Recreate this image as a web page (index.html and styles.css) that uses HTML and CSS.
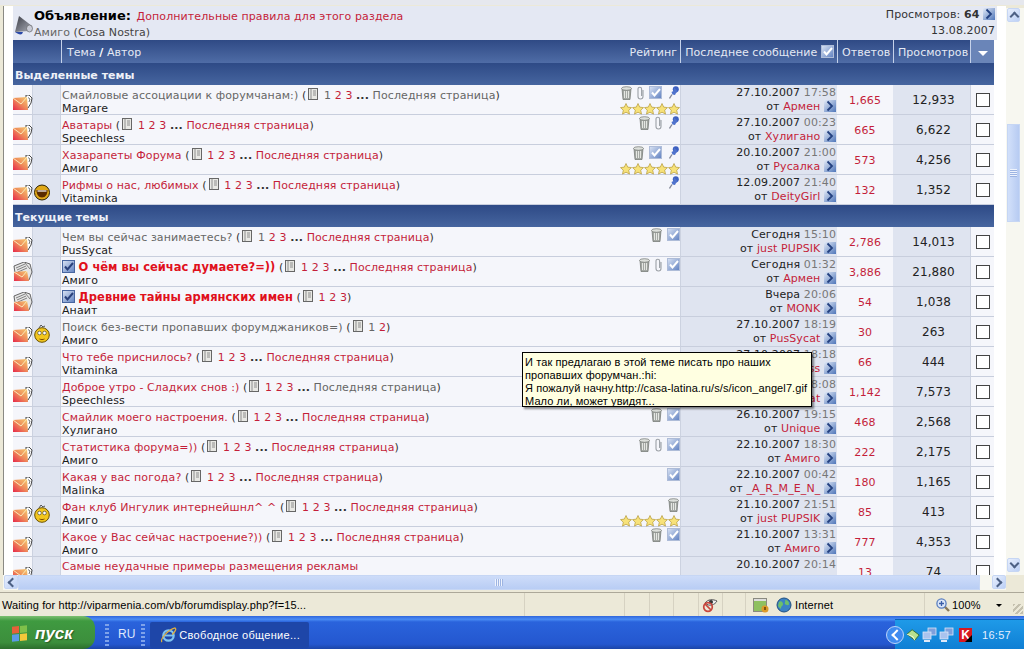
FILE: index.html
```html
<!DOCTYPE html>
<html lang="ru">
<head>
    <meta charset="UTF-8">
    <title>Свободное общение</title>
    <link rel="stylesheet" href="styles.css">
</head>
<body>
    <svg class="defs" width="0" height="0">
        <defs>
            <linearGradient id="envGrad" x1="1" y1="0" x2="0" y2="1"><stop offset="0" stop-color="#f5cf72"/><stop offset=".5" stop-color="#ef8a5a"/><stop offset="1" stop-color="#e6284a"/></linearGradient>
            <linearGradient id="goGrad" x1="0" y1="0" x2="1" y2="1"><stop offset="0" stop-color="#e4ebf7"/><stop offset="1" stop-color="#4f76ba"/></linearGradient>
            <linearGradient id="boxGrad" x1="0" y1="0" x2="1" y2="1"><stop offset="0" stop-color="#dbe4f4"/><stop offset="1" stop-color="#5f80c0"/></linearGradient>
            <linearGradient id="hornGrad" x1="0" y1="0" x2="1" y2="1"><stop offset="0" stop-color="#3c3e46"/><stop offset="1" stop-color="#a9adb8"/></linearGradient>
            <symbol id="env" viewBox="0 0 20 15">
                <path d="M13 0h3l3 3-1 5-3 5h-2z" fill="#fff" stroke="#333" stroke-width=".9"/>
                <path d="M15 2.500l2 1.500-1 3" fill="none" stroke="#555" stroke-width=".8"/>
                <path d="M0 3l14-1 1 13H0z" fill="url(#envGrad)"/>
                <path d="M0 3l8 6 6-7" fill="none" stroke="#fbe9b8" stroke-width="1"/>
            </symbol>
            <symbol id="envhot" viewBox="0 0 20 20">
                <path d="M1 4l10-4 6 2 2 8-3 8H3z" fill="#e6e6e6" stroke="#444" stroke-width=".8"/>
                <path d="M3 6l9-4M4 8l9-4M5 10l9-4M12 1l5 6" stroke="#555" stroke-width=".7" fill="none"/>
                <path d="M1 10l13-1 2 10H1z" fill="url(#envGrad)"/>
                <path d="M1 10l8 5 5-6" fill="none" stroke="#fbe9b8" stroke-width="1"/>
            </symbol>
            <symbol id="trash" viewBox="0 0 11 14">
                <path d="M1 2.500h9l-1 11H2z" fill="#a4a8a4" stroke="#6f736f" stroke-width=".7"/>
                <ellipse cx="5.500" cy="2.500" rx="5" ry="1.800" fill="#dde0dc" stroke="#6f736f" stroke-width=".7"/>
                <path d="M3.500 5v7M5.500 5v7M7.500 5v7" stroke="#eceeea" stroke-width=".9"/>
            </symbol>
            <symbol id="clip" viewBox="0 0 7 14">
                <path d="M6 4v6.500a2.500 2.500 0 0 1-5 0V3a1.800 1.800 0 0 1 3.600 0V10" fill="none" stroke="#9ba0a6" stroke-width="1.100"/>
            </symbol>
            <symbol id="check" viewBox="0 0 13 13">
                <rect x=".5" y=".5" width="12" height="12" fill="url(#boxGrad)" stroke="#aebcd8"/>
                <path d="M3 6.500l2.500 3L11 3" fill="none" stroke="#fff" stroke-width="2"/>
            </symbol>
            <symbol id="checkb" viewBox="0 0 13 13">
                <rect x=".5" y=".5" width="12" height="12" fill="url(#boxGrad)" stroke="#47659f"/>
                <path d="M3 6.500l2.500 3L11 3" fill="none" stroke="#29407a" stroke-width="2"/>
            </symbol>
            <symbol id="pin" viewBox="0 0 10 13">
                <circle cx="6.800" cy="3.200" r="3" fill="#3c5fc0"/>
                <path d="M5 1.500l4 4-2 1.500-1 2-2.500-.5-1-2.500 2-1z" fill="#4f72cc"/>
                <path d="M3 8.500L.5 12.500" stroke="#7f8494" stroke-width="1.300"/>
            </symbol>
            <symbol id="star" viewBox="0 0 12 12">
                <path d="M6 .5l1.700 3.600 3.800.5-2.800 2.600.8 3.900L6 9.200l-3.500 1.900.8-3.900L.5 4.600l3.800-.5z" fill="#f7e27a" stroke="#b59a3a" stroke-width=".7"/>
            </symbol>
            <symbol id="go" viewBox="0 0 12 12">
                <rect width="12" height="12" fill="url(#goGrad)"/>
                <path d="M3.500 1.500L8 6l-4.500 4.500" fill="none" stroke="#23407f" stroke-width="1.800"/>
            </symbol>
            <symbol id="doc" viewBox="0 0 12 12">
                <rect x="1.500" y=".5" width="9" height="11" fill="#e8e8e4" stroke="#666"/>
                <path d="M4 .5v11M6 3h3M6 5h3M6 7h3" stroke="#777" stroke-width=".8"/>
            </symbol>
            <symbol id="smile" viewBox="0 0 16 20">
                <circle cx="8" cy="12" r="7.300" fill="#f2c61e" stroke="#6b5200"/>
                <circle cx="5.500" cy="10" r="1.800" fill="#fff" stroke="#333" stroke-width=".6"/>
                <circle cx="10.500" cy="10" r="1.800" fill="#fff" stroke="#333" stroke-width=".6"/>
                <path d="M5.500 16c1.700.8 3.300.8 5 0" fill="none" stroke="#7a4a00"/>
                <path d="M5 5l2-3 2 2 2-1" fill="none" stroke="#555"/>
            </symbol>
            <symbol id="laugh" viewBox="0 0 16 18">
                <circle cx="8" cy="9.500" r="7.500" fill="#e0a818" stroke="#2e2100"/>
                <path d="M2.500 7h11c.2 4-2 7.500-5.500 7.500S2.300 11 2.500 7z" fill="#5b2c00"/>
                <path d="M3.500 8h9" stroke="#fff" stroke-width="1.200"/>
            </symbol>
            <symbol id="horn" viewBox="0 0 19 20">
                <path d="M5 1l13 10-3 5-14 1z" fill="url(#hornGrad)"/>
                <path d="M1 17c3 2 5 3 7 2l1-2z" fill="#2a49a8"/>
                <ellipse cx="15.500" cy="13.500" rx="3" ry="3.500" fill="#c9ccd6" stroke="#555" stroke-width=".6"/>
            </symbol>
            <symbol id="ieglobe" viewBox="0 0 16 16">
                <circle cx="8" cy="8" r="7" fill="#3b81c4" stroke="#1f4f80"/>
                <path d="M3 5c2-2 4 0 4 2s-2 2-2 4-2-1-3-2M9 3c3 0 4 2 4 4s-3 1-4 0 1-2 0-4z" fill="#6ec06a"/>
            </symbol>
            <symbol id="ielogo" viewBox="0 0 18 18">
                <circle cx="9" cy="9" r="5.500" fill="none" stroke="#7fc4f2" stroke-width="2.400"/>
                <path d="M4 9h10" stroke="#7fc4f2" stroke-width="2"/>
                <path d="M2 16C0 13 8 3 16 1c2 1-1 5-3 7" fill="none" stroke="#e0b040" stroke-width="1.300"/>
            </symbol>
            <symbol id="eye" viewBox="0 0 16 16">
                <path d="M3 6c3-4 8-4 12-2-2 4-8 6-12 2z" fill="#eee" stroke="#555"/>
                <circle cx="9" cy="5" r="2" fill="#333"/>
                <circle cx="6" cy="10" r="4.300" fill="none" stroke="#c8453c" stroke-width="1.700"/>
                <path d="M3 7l6 6" stroke="#c8453c" stroke-width="1.700"/>
            </symbol>
            <symbol id="lock" viewBox="0 0 16 16">
                <rect x=".5" y="1.500" width="13" height="13" fill="#8fc060" stroke="#8a8a80"/>
                <path d="M1 2h12v2H1z" fill="#ddd"/>
                <circle cx="12" cy="12" r="3.500" fill="#dc9a2a"/>
                <path d="M12 10v3" stroke="#5a3a00" stroke-width="1.400"/>
            </symbol>
            <symbol id="lens" viewBox="0 0 14 14">
                <path d="M8 8l5 5" stroke="#8a7a5a" stroke-width="2.400"/>
                <circle cx="5.500" cy="5.500" r="4.600" fill="#dbe6f8" stroke="#5a7fc0" stroke-width="1.300"/>
                <path d="M3 5.500h5M5.500 3v5" stroke="#3b5fa8" stroke-width="1.300"/>
            </symbol>
            <symbol id="net" viewBox="0 0 15 15">
                <rect x="6" y="1" width="8" height="7" fill="#7ea0dc" stroke="#dbe6f8" stroke-width=".8"/>
                <rect x="1" y="5" width="8" height="7" fill="#a9c3ee" stroke="#dbe6f8" stroke-width=".8"/>
                <path d="M2 14h6" stroke="#dfe8f8" stroke-width="2"/>
            </symbol>
            <symbol id="trayenv" viewBox="0 0 16 14">
                <path d="M1 6l6-5 8 6-5 6z" fill="#b7e08e" stroke="#2f6b2f"/>
                <path d="M1 6l7 3 2 4" fill="none" stroke="#f4f8e6"/>
            </symbol>
        </defs>
    </svg>

    <div class="browser">
        <div class="viewport">
            <div class="page">
                <div class="announce">
                    <svg class="horn"><use href="#horn"/></svg>
                    <div class="announce-text">
                        <div><b class="announce-label">Объявление:</b> <a>Дополнительные правила для этого раздела</a></div>
                        <div class="announce-by"><span class="muted">Амиго</span> (Cosa Nostra)</div>
                    </div>
                    <div class="announce-meta">
                        <div>Просмотров: <b>64</b> <svg class="go"><use href="#go"/></svg></div>
                        <div>13.08.2007</div>
                    </div>
                </div>

                <table class="topics">
                    <colgroup>
                        <col class="c-icon"><col class="c-smile"><col class="c-title"><col class="c-last"><col class="c-replies"><col class="c-views"><col class="c-box">
                    </colgroup>
                    <thead>
                        <tr class="thead">
                            <th colspan="2"></th>
                            <th><div class="th-title"><span>Тема <b>/</b> Автор</span><span>Рейтинг</span></div></th>
                            <th class="num">Последнее сообщение <svg class="check"><use href="#check"/></svg></th>
                            <th class="num">Ответов</th>
                            <th class="num">Просмотров</th>
                            <th class="sortcell"><span class="tri"></span></th>
                        </tr>
                    </thead>
                    <tbody>
                        <tr class="section"><td colspan="7">Выделенные темы</td></tr>

                        <tr>
                            <td class="alt1"><svg class="env"><use href="#env"/></svg></td><td class="alt2"></td>
                            <td class="title">
                                <div class="title-icons stacked">
                                    <div><svg class="i-trash"><use href="#trash"/></svg><svg class="i-clip"><use href="#clip"/></svg><svg class="i-check"><use href="#check"/></svg><svg class="i-pin"><use href="#pin"/></svg></div>
                                    <div class="stars"><svg><use href="#star"/></svg><svg><use href="#star"/></svg><svg><use href="#star"/></svg><svg><use href="#star"/></svg><svg><use href="#star"/></svg></div>
                                </div>
                                <div class="line"><a class="seen">Смайловые ассоциации к форумчанам:)</a> (<svg class="doc"><use href="#doc"/></svg> <span class="seen">1</span> <a>2</a> <a>3</a> <b>...</b> <span class="seen">Последняя страница</span>)</div>
                                <div class="line author">Margare</div>
                            </td>
                            <td class="last"><div class="line">27.10.2007 <span class="time">17:58</span></div><div class="line">от <a>Армен</a> <svg class="go"><use href="#go"/></svg></div></td>
                            <td class="replies"><a>1,665</a></td><td class="views">12,933</td><td class="box"><span class="cb"></span></td>
                        </tr>
                        <tr>
                            <td class="alt1"><svg class="env"><use href="#env"/></svg></td><td class="alt2"></td>
                            <td class="title">
                                <div class="title-icons stacked">
                                    <div><svg class="i-trash"><use href="#trash"/></svg><svg class="i-clip"><use href="#clip"/></svg><svg class="i-pin"><use href="#pin"/></svg></div>
                                </div>
                                <div class="line"><a>Аватары</a> (<svg class="doc"><use href="#doc"/></svg> <a>1</a> <a>2</a> <a>3</a> <b>...</b> <a>Последняя страница</a>)</div>
                                <div class="line author">Speechless</div>
                            </td>
                            <td class="last"><div class="line">27.10.2007 <span class="time">00:23</span></div><div class="line">от <a>Хулигано</a> <svg class="go"><use href="#go"/></svg></div></td>
                            <td class="replies"><a>665</a></td><td class="views">6,622</td><td class="box"><span class="cb"></span></td>
                        </tr>
                        <tr>
                            <td class="alt1"><svg class="env"><use href="#env"/></svg></td><td class="alt2"></td>
                            <td class="title">
                                <div class="title-icons stacked">
                                    <div><svg class="i-trash"><use href="#trash"/></svg><svg class="i-check"><use href="#check"/></svg><svg class="i-pin"><use href="#pin"/></svg></div>
                                    <div class="stars"><svg><use href="#star"/></svg><svg><use href="#star"/></svg><svg><use href="#star"/></svg><svg><use href="#star"/></svg><svg><use href="#star"/></svg></div>
                                </div>
                                <div class="line"><a>Хазарапеты Форума</a> (<svg class="doc"><use href="#doc"/></svg> <a>1</a> <a>2</a> <a>3</a> <b>...</b> <a>Последняя страница</a>)</div>
                                <div class="line author">Амиго</div>
                            </td>
                            <td class="last"><div class="line">20.10.2007 <span class="time">21:00</span></div><div class="line">от <a>Русалка</a> <svg class="go"><use href="#go"/></svg></div></td>
                            <td class="replies"><a>573</a></td><td class="views">4,256</td><td class="box"><span class="cb"></span></td>
                        </tr>
                        <tr>
                            <td class="alt1"><svg class="env"><use href="#env"/></svg></td><td class="alt2"><svg class="smiley laughing"><use href="#laugh"/></svg></td>
                            <td class="title">
                                <div class="title-icons stacked"><div><svg class="i-pin"><use href="#pin"/></svg></div></div>
                                <div class="line"><a>Рифмы о нас, любимых</a> (<svg class="doc"><use href="#doc"/></svg> <a>1</a> <a>2</a> <a>3</a> <b>...</b> <a>Последняя страница</a>)</div>
                                <div class="line author">Vitaminka</div>
                            </td>
                            <td class="last"><div class="line">12.09.2007 <span class="time">21:40</span></div><div class="line">от <a>DeityGirl</a> <svg class="go"><use href="#go"/></svg></div></td>
                            <td class="replies"><a>132</a></td><td class="views">1,352</td><td class="box"><span class="cb"></span></td>
                        </tr>

                        <tr class="section"><td colspan="7">Текущие темы</td></tr>

                        <tr>
                            <td class="alt1"><svg class="env"><use href="#env"/></svg></td><td class="alt2"></td>
                            <td class="title">
                                <div class="title-icons"><svg class="i-trash"><use href="#trash"/></svg><svg class="i-check"><use href="#check"/></svg></div>
                                <div class="line"><a class="seen">Чем вы сейчас занимаетесь?</a> (<svg class="doc"><use href="#doc"/></svg> <span class="seen">1</span> <a>2</a> <a>3</a> <b>...</b> <a>Последняя страница</a>)</div>
                                <div class="line author">PusSycat</div>
                            </td>
                            <td class="last"><div class="line">Сегодня <span class="time">15:10</span></div><div class="line">от <a>just PUPSIK</a> <svg class="go"><use href="#go"/></svg></div></td>
                            <td class="replies"><a>2,786</a></td><td class="views">14,013</td><td class="box"><span class="cb"></span></td>
                        </tr>
                        <tr>
                            <td class="alt1"><svg class="env hot"><use href="#envhot"/></svg></td><td class="alt2"></td>
                            <td class="title">
                                <div class="title-icons"><svg class="i-trash"><use href="#trash"/></svg><svg class="i-clip"><use href="#clip"/></svg><svg class="i-check"><use href="#check"/></svg></div>
                                <div class="line"><svg class="title-check"><use href="#checkb"/></svg> <a class="strong">О чём вы сейчас думаете?=))</a> (<svg class="doc"><use href="#doc"/></svg> <a>1</a> <a>2</a> <a>3</a> <b>...</b> <a>Последняя страница</a>)</div>
                                <div class="line author">Амиго</div>
                            </td>
                            <td class="last"><div class="line">Сегодня <span class="time">01:32</span></div><div class="line">от <a>Армен</a> <svg class="go"><use href="#go"/></svg></div></td>
                            <td class="replies"><a>3,886</a></td><td class="views">21,880</td><td class="box"><span class="cb"></span></td>
                        </tr>
                        <tr>
                            <td class="alt1"><svg class="env hot"><use href="#envhot"/></svg></td><td class="alt2"></td>
                            <td class="title">
                                <div class="line"><svg class="title-check"><use href="#checkb"/></svg> <a class="strong">Древние тайны армянских имен</a> (<svg class="doc"><use href="#doc"/></svg> <a>1</a> <a>2</a> <a>3</a>)</div>
                                <div class="line author">Анаит</div>
                            </td>
                            <td class="last"><div class="line">Вчера <span class="time">20:06</span></div><div class="line">от <a>MONK</a> <svg class="go"><use href="#go"/></svg></div></td>
                            <td class="replies"><a>54</a></td><td class="views">1,038</td><td class="box"><span class="cb"></span></td>
                        </tr>
                        <tr>
                            <td class="alt1"><svg class="env"><use href="#env"/></svg></td><td class="alt2"><svg class="smiley"><use href="#smile"/></svg></td>
                            <td class="title">
                                <div class="line"><a class="seen">Поиск без-вести пропавших форумджаников=)</a> (<svg class="doc"><use href="#doc"/></svg> <span class="seen">1</span> <a>2</a>)</div>
                                <div class="line author">Амиго</div>
                            </td>
                            <td class="last"><div class="line">27.10.2007 <span class="time">18:19</span></div><div class="line">от <a>PusSycat</a> <svg class="go"><use href="#go"/></svg></div></td>
                            <td class="replies"><a>30</a></td><td class="views">263</td><td class="box"><span class="cb"></span></td>
                        </tr>
                        <tr>
                            <td class="alt1"><svg class="env"><use href="#env"/></svg></td><td class="alt2"></td>
                            <td class="title">
                                <div class="line"><a>Что тебе приснилось?</a> (<svg class="doc"><use href="#doc"/></svg> <a>1</a> <a>2</a> <a>3</a> <b>...</b> <a>Последняя страница</a>)</div>
                                <div class="line author">Vitaminka</div>
                            </td>
                            <td class="last"><div class="line">27.10.2007 <span class="time">18:18</span></div><div class="line">от <a>Miss</a> <svg class="go"><use href="#go"/></svg></div></td>
                            <td class="replies"><a>66</a></td><td class="views">444</td><td class="box"><span class="cb"></span></td>
                        </tr>
                        <tr>
                            <td class="alt1"><svg class="env"><use href="#env"/></svg></td><td class="alt2"></td>
                            <td class="title">
                                <div class="line"><a>Доброе утро - Сладких снов :)</a> (<svg class="doc"><use href="#doc"/></svg> <a>1</a> <a>2</a> <a>3</a> <b>...</b> <span class="seen">Последняя страница</span>)</div>
                                <div class="line author">Speechless</div>
                            </td>
                            <td class="last"><div class="line">27.10.2007 <span class="time">18:08</span></div><div class="line">от <a>Pussycat</a> <svg class="go"><use href="#go"/></svg></div></td>
                            <td class="replies"><a>1,142</a></td><td class="views">7,573</td><td class="box"><span class="cb"></span></td>
                        </tr>
                        <tr>
                            <td class="alt1"><svg class="env"><use href="#env"/></svg></td><td class="alt2"></td>
                            <td class="title">
                                <div class="title-icons"><svg class="i-trash"><use href="#trash"/></svg><svg class="i-check"><use href="#check"/></svg></div>
                                <div class="line"><a>Смайлик моего настроения.</a> (<svg class="doc"><use href="#doc"/></svg> <a>1</a> <a>2</a> <a>3</a> <b>...</b> <a>Последняя страница</a>)</div>
                                <div class="line author">Хулигано</div>
                            </td>
                            <td class="last"><div class="line">26.10.2007 <span class="time">19:15</span></div><div class="line">от <a>Unique</a> <svg class="go"><use href="#go"/></svg></div></td>
                            <td class="replies"><a>468</a></td><td class="views">2,568</td><td class="box"><span class="cb"></span></td>
                        </tr>
                        <tr>
                            <td class="alt1"><svg class="env"><use href="#env"/></svg></td><td class="alt2"></td>
                            <td class="title">
                                <div class="title-icons"><svg class="i-trash"><use href="#trash"/></svg><svg class="i-clip"><use href="#clip"/></svg><svg class="i-check"><use href="#check"/></svg></div>
                                <div class="line"><a>Статистика форума=))</a> (<svg class="doc"><use href="#doc"/></svg> <a>1</a> <a>2</a> <a>3</a> <b>...</b> <a>Последняя страница</a>)</div>
                                <div class="line author">Амиго</div>
                            </td>
                            <td class="last"><div class="line">22.10.2007 <span class="time">18:30</span></div><div class="line">от <a>Амиго</a> <svg class="go"><use href="#go"/></svg></div></td>
                            <td class="replies"><a>222</a></td><td class="views">2,175</td><td class="box"><span class="cb"></span></td>
                        </tr>
                        <tr>
                            <td class="alt1"><svg class="env"><use href="#env"/></svg></td><td class="alt2"></td>
                            <td class="title">
                                <div class="title-icons"><svg class="i-check"><use href="#check"/></svg></div>
                                <div class="line"><a>Какая у вас погода?</a> (<svg class="doc"><use href="#doc"/></svg> <a>1</a> <a>2</a> <a>3</a> <b>...</b> <a>Последняя страница</a>)</div>
                                <div class="line author">Malinka</div>
                            </td>
                            <td class="last"><div class="line">22.10.2007 <span class="time">00:42</span></div><div class="line">от <a>_A_R_M_E_N_</a> <svg class="go"><use href="#go"/></svg></div></td>
                            <td class="replies"><a>180</a></td><td class="views">1,165</td><td class="box"><span class="cb"></span></td>
                        </tr>
                        <tr>
                            <td class="alt1"><svg class="env"><use href="#env"/></svg></td><td class="alt2"><svg class="smiley"><use href="#smile"/></svg></td>
                            <td class="title">
                                <div class="title-icons stacked">
                                    <div><svg class="i-trash"><use href="#trash"/></svg></div>
                                    <div class="stars"><svg><use href="#star"/></svg><svg><use href="#star"/></svg><svg><use href="#star"/></svg><svg><use href="#star"/></svg><svg><use href="#star"/></svg></div>
                                </div>
                                <div class="line"><a>Фан клуб Ингулик интернейшнл^ ^</a> (<svg class="doc"><use href="#doc"/></svg> <a>1</a> <a>2</a> <a>3</a> <b>...</b> <a>Последняя страница</a>)</div>
                                <div class="line author">Амиго</div>
                            </td>
                            <td class="last"><div class="line">21.10.2007 <span class="time">21:51</span></div><div class="line">от <a>just PUPSIK</a> <svg class="go"><use href="#go"/></svg></div></td>
                            <td class="replies"><a>85</a></td><td class="views">413</td><td class="box"><span class="cb"></span></td>
                        </tr>
                        <tr>
                            <td class="alt1"><svg class="env"><use href="#env"/></svg></td><td class="alt2"></td>
                            <td class="title">
                                <div class="title-icons"><svg class="i-trash"><use href="#trash"/></svg><svg class="i-check"><use href="#check"/></svg></div>
                                <div class="line"><a>Какое у Вас сейчас настроение?))</a> (<svg class="doc"><use href="#doc"/></svg> <a>1</a> <a>2</a> <a>3</a> <b>...</b> <a>Последняя страница</a>)</div>
                                <div class="line author">Амиго</div>
                            </td>
                            <td class="last"><div class="line">21.10.2007 <span class="time">13:31</span></div><div class="line">от <a>Амиго</a> <svg class="go"><use href="#go"/></svg></div></td>
                            <td class="replies"><a>777</a></td><td class="views">4,353</td><td class="box"><span class="cb"></span></td>
                        </tr>
                        <tr>
                            <td class="alt1"><svg class="env"><use href="#env"/></svg></td><td class="alt2"></td>
                            <td class="title">
                                <div class="line"><a>Самые неудачные примеры размещения рекламы</a></div>
                            </td>
                            <td class="last"><div class="line">20.10.2007 <span class="time">20:14</span></div></td>
                            <td class="replies"><a>13</a></td><td class="views">74</td><td class="box"><span class="cb"></span></td>
                        </tr>
                    </tbody>
                </table>

                <div class="tooltip">
                    И так предлагаю в этой теме писать про наших<br>
                    пропавших форумчан.:hi:<br>
                    Я пожалуй начну.http://casa-latina.ru/s/s/icon_angel7.gif<br>
                    Мало ли, может увидят...
                </div>
            </div>
            <div class="vscroll">
                <div class="sb-btn up"></div>
                <div class="sb-track"><div class="sb-thumb"></div></div>
                <div class="sb-btn down"></div>
            </div>
        </div>
        <div class="hscroll">
            <div class="sb-btn left"></div>
            <div class="hs-track"><div class="hs-thumb"></div></div>
            <div class="sb-btn right"></div>
        </div>
    </div>

    <div class="statusbar">
        <div class="status-text">Waiting for http://viparmenia.com/vb/forumdisplay.php?f=15...</div>
        <div class="status-pane w1"></div>
        <div class="status-pane w2"></div>
        <div class="status-pane w2"></div>
        <div class="status-pane w2"></div>
        <div class="status-pane w2 privacy"><svg class="st-icon"><use href="#eye"/></svg></div>
        <div class="status-pane w3"></div>
        <div class="status-pane zone"><svg class="st-icon"><use href="#lock"/></svg><svg class="st-icon"><use href="#ieglobe"/></svg>Internet</div>
        <div class="status-pane zoom"><svg class="lens"><use href="#lens"/></svg>100%<span class="zoom-tri"></span><span class="resize"></span></div>
    </div>

    <div class="taskbar">
        <div class="start"><span class="flag"><i></i><i></i><i></i><i></i></span>пуск</div>
        <div class="grip"></div>
        <div class="lang">RU</div>
        <div class="grip"></div>
        <div class="task"><svg class="ie"><use href="#ielogo"/></svg>Свободное общение...</div>
        <div class="tray">
            <span class="tray-toggle"></span>
            <svg class="tray-env"><use href="#trayenv"/></svg>
            <svg class="tray-net"><use href="#net"/></svg>
            <svg class="tray-net"><use href="#net"/></svg>
            <span class="tray-k">K</span>
            <span class="clock">16:57</span>
        </div>
    </div>
</body>
</html>
```

FILE: styles.css
```css
* {
    box-sizing: border-box;
}

html, body {
    margin: 0;
    height: 649px;
    overflow: hidden;
}

body {
    display: flex;
    flex-direction: column;
    font-family: "DejaVu Sans", Verdana, sans-serif;
    font-size: 11px;
    letter-spacing: .1px;
    color: #000;
    background: #fff;
}

.defs {
    position: absolute;
}

a {
    color: #c41e3a;
}

/* browser frame */
.browser {
    height: 592px;
    flex: none;
    display: flex;
    flex-direction: column;
    padding: 1px 0 2px 3px;
    border-top: 5px solid;
    border-image: linear-gradient(#e6e8ee 60%, #85878c 60%) 5;
    background: #ece9d8;
}

.viewport {
    flex: 1;
    display: flex;
    min-height: 0;
    border-left: 1px solid #8a8a84;
}

.page {
    position: relative;
    width: 1002px;
    flex: none;
    padding: 0 9px;
    overflow: hidden;
    background: #fff;
}

/* announcement */
.announce {
    display: flex;
    height: 34px;
    background: #e4e8f3;
    padding-right: 2px;
}

.horn {
    width: 19px;
    height: 20px;
    margin: 9px 1px 0 1px;
    flex: none;
}

.announce-text {
    flex: 1;
    line-height: 16px;
    padding-top: 2px;
    color: #444;
}

.announce-label {
    font-size: 13px;
    letter-spacing: 0;
    margin-right: 2px;
    color: #000;
}

.muted {
    color: #666;
}

.announce-meta {
    text-align: right;
    line-height: 16px;
    padding-top: 1px;
    color: #333;
}

/* topic table */
.topics {
    width: 981px;
    table-layout: fixed;
    border-collapse: separate;
    border-spacing: 0;
}

.c-icon { width: 20px; }
.c-smile { width: 28px; }
.c-title { width: 619px; }
.c-last { width: 157px; }
.c-replies { width: 56px; }
.c-views { width: 77px; }
.c-box { width: 24px; }

.thead th {
    height: 23px;
    padding: 1px 3px 0 4px;
    font-weight: normal;
    letter-spacing: .05px;
    color: #e4e9f4;
    background: linear-gradient(#2f4a85, #4f6ca6);
    border-left: 1px solid #c5d2ea;
    white-space: nowrap;
    overflow: hidden;
}

.thead th:first-child {
    border-left: 0;
}

.th-title {
    display: flex;
    justify-content: space-between;
    padding-left: 1px;
}

.th-title b {
    color: #fff;
}

.thead .sortcell {
    background: #6a85b8;
    text-align: center;
}

.tri {
    display: inline-block;
    border-style: solid;
    border-width: 5px 5px 0;
    border-color: #fff transparent transparent;
}

.section td {
    height: 22px;
    padding: 2px 2px 0;
    font-weight: bold;
    letter-spacing: 0;
    color: #eef1f8;
    background: linear-gradient(#2e4a86, #46659f);
}

.topics tbody tr:not(.section) td {
    height: 30px;
    padding: 0;
    border-bottom: 1px solid #c8cedd;
    line-height: 14px;
    vertical-align: top;
}

.line {
    height: 14px;
}

.topics tbody tr:not(.section) .alt1 {
    background: #f5f6fb;
    border-right: 1px solid #ccd2e0;
}

.topics tbody tr:not(.section) .alt2 {
    background: #dfe4f0;
    border-right: 1px solid #ccd2e0;
}

.topics tbody tr:not(.section) .title {
    background: #f5f6fb;
    padding: 3px 0 0 1px;
    color: #333;
    white-space: nowrap;
}

.author {
    margin-bottom: -3px;
    color: #1c1c1c;
}

.topics tbody tr:not(.section) .last {
    background: #dfe4f0;
    text-align: right;
    padding: 1px 1px 0 0;
    color: #222;
    border-left: 1px solid #ccd2e0;
}

.topics tbody tr:not(.section) .replies {
    background: #f5f6fb;
    text-align: center;
    padding-top: 9px;
}

.topics tbody tr:not(.section) .views {
    background: #dfe4f0;
    text-align: center;
    padding-top: 8px;
    padding-left: 4px;
    font-size: 12px;
    color: #222;
}

.topics tbody tr:not(.section) .box {
    background: #f5f6fb;
    border-left: 1px solid #ccd2e0;
    padding-top: 8px;
}

.seen {
    color: #666;
}

.strong {
    font-weight: bold;
    font-size: 11.5px;
    letter-spacing: 0;
    color: #e0101c;
}

.time {
    color: #777;
}

.cb {
    display: block;
    width: 14px;
    height: 14px;
    margin: 0 auto;
    border: 1px solid #444;
    background: #fff;
}

.env {
    display: block;
    width: 20px;
    height: 15px;
    margin-top: 10px;
}

.env.hot {
    height: 20px;
    margin-top: 5px;
}

.smiley {
    display: block;
    width: 16px;
    height: 20px;
    margin: 6px 0 0 1px;
}

.smiley.laughing {
    height: 18px;
    margin-top: 8px;
}

.title-icons {
    float: right;
    display: flex;
    gap: 5px;
    margin-top: -2px;
    height: 14px;
}

.title-icons.stacked {
    display: block;
    height: 26px;
}

.title-icons.stacked > div:first-child {
    display: flex;
    justify-content: flex-end;
    gap: 5px;
    height: 17px;
    padding-right: 1px;
}

.i-trash { width: 11px; height: 14px; }
.i-clip { width: 7px; height: 14px; }
.i-check { width: 13px; height: 13px; }
.i-pin { width: 10px; height: 13px; margin-left: 2px; }

.stars {
    display: flex;
    justify-content: flex-end;
}

.stars svg {
    width: 12px;
    height: 12px;
}

.go {
    width: 12px;
    height: 12px;
    vertical-align: -2px;
}

.doc {
    width: 12px;
    height: 12px;
    margin: 0 1px;
    vertical-align: -1px;
}

.check, .title-check {
    width: 13px;
    height: 13px;
    vertical-align: -2px;
}

/* tooltip */
.tooltip {
    position: absolute;
    left: 518px;
    top: 346px;
    width: 290px;
    height: 55px;
    padding: 3px 2px 0;
    font-family: "Liberation Sans", Arial, sans-serif;
    font-size: 11px;
    line-height: 13px;
    background: #ffffe1;
    border: 1px solid #000;
    box-shadow: 2px 2px 2px rgba(0, 0, 0, .45);
    white-space: nowrap;
}

/* scrollbars */
.vscroll {
    width: 18px;
    flex: none;
    padding: 0 0 3px 1px;
    margin-top: 2px;
    display: flex;
    flex-direction: column;
    background: #f7f7f0;
}

.sb-btn {
    position: relative;
    flex: none;
    width: 13px;
    height: 14px;
    background: linear-gradient(135deg, #e8effd, #bcd0f6);
    border: 1px solid #c6d6f4;
    border-radius: 2px;
}

.sb-btn::after {
    content: "";
    position: absolute;
    left: 3px;
    top: 4px;
    width: 5px;
    height: 5px;
    border-left: 2px solid #4d6185;
    border-top: 2px solid #4d6185;
    transform: rotate(45deg);
}

.sb-btn.down::after { transform: rotate(225deg); top: 1px; }
.sb-btn.left::after { transform: rotate(-45deg); left: 4px; top: 3px; }
.sb-btn.right::after { transform: rotate(135deg); left: 1px; top: 3px; }

.sb-track {
    flex: 1;
    padding-top: 102px;
}

.sb-thumb {
    width: 13px;
    height: 98px;
    display: flex;
    align-items: center;
    justify-content: center;
    background: linear-gradient(90deg, #d2e0fa, #b7cbf2);
    border: 1px solid #c6d6f4;
}

.sb-thumb::after {
    content: "";
    width: 7px;
    height: 8px;
    background: repeating-linear-gradient(#eef3fd 0 1px, #9db4e2 1px 2px);
}

.hscroll {
    display: flex;
    height: 15px;
    flex: none;
    padding-left: 1px;
    margin-right: 18px;
    background: #f7f7f0;
}

.hscroll .sb-btn {
    width: 14px;
}

.hs-track {
    flex: 1;
    padding-right: 12px;
}

.hs-thumb {
    height: 15px;
    display: flex;
    align-items: center;
    justify-content: center;
    background: linear-gradient(#cddcf9, #b9cdf4);
    border: 1px solid #c6d6f4;
}

.hs-thumb::after {
    content: "";
    width: 8px;
    height: 7px;
    background: repeating-linear-gradient(90deg, #eef3fd 0 1px, #9db4e2 1px 2px);
}

/* status bar */
.statusbar {
    display: flex;
    height: 24px;
    flex: none;
    align-items: center;
    font-family: "Liberation Sans", Arial, sans-serif;
    font-size: 11px;
    background: #ece9d8;
    border-top: 1px solid #aca899;
}

.status-text {
    flex: 1;
    padding: 1px 0 0 2px;
    white-space: nowrap;
}

.status-pane {
    flex: none;
    height: 100%;
    border-left: 1px solid #d6d2c2;
    display: flex;
    align-items: center;
    padding-top: 1px;
}

.w1 { width: 100px; }
.w2 { width: 24.5px; }
.w3 { width: 23px; }

.privacy {
    justify-content: center;
}

.zone {
    width: 179px;
    gap: 6px;
    padding-left: 7px;
}

.zone .st-icon + .st-icon {
    margin: 0 -3px 0 1px;
}

.zoom {
    width: 100px;
    padding-left: 11px;
    position: relative;
}

.st-icon {
    width: 16px;
    height: 16px;
}

.lens {
    width: 14px;
    height: 14px;
    margin-right: 2px;
}

.zoom-tri {
    width: 0;
    height: 0;
    margin-left: 15px;
    border-style: solid;
    border-width: 3px 3px 0;
    border-color: #000 transparent transparent;
}

.resize {
    position: absolute;
    right: 1px;
    bottom: 2px;
    width: 10px;
    height: 10px;
    background: repeating-linear-gradient(135deg, #c4c0ae 0 2px, transparent 2px 4px);
}

/* taskbar */
.taskbar {
    flex: 1;
    display: flex;
    align-items: center;
    background: linear-gradient(#2f66dc 0, #4a8cf4 10%, #2a63dc 18%, #2457cf 85%, #1c45a8 100%);
    font-family: "Liberation Sans", Arial, sans-serif;
    color: #fff;
    font-size: 11px;
    letter-spacing: 0;
}

.start {
    width: 95px;
    height: 100%;
    flex: none;
    display: flex;
    align-items: center;
    gap: 8px;
    padding: 2px 0 0 12px;
    font-size: 17px;
    font-style: italic;
    font-weight: bold;
    text-shadow: 1px 1px 1px #2c5c24;
    background: linear-gradient(#7cc070, #3f9a40 15%, #3c8e3c 80%, #2c6e2c);
    border-radius: 0 12px 12px 0;
}

.flag {
    display: grid;
    grid-template-columns: 7px 7px;
    gap: 1px;
    transform: skewY(-6deg);
}

.flag i {
    height: 7px;
    background: #e5613a;
}

.flag i:nth-child(2) { background: #7fc04a; }
.flag i:nth-child(3) { background: #5a9be8; }
.flag i:nth-child(4) { background: #f3c83a; }

.grip {
    width: 4px;
    height: 22px;
    margin: 4px 0 0 10px;
    background: repeating-linear-gradient(#7ea2ea 0 2px, transparent 2px 4px);
}

.lang {
    margin: 3px 0 0 9px;
    font-size: 12px;
    color: #dfe8fb;
}

.lang + .grip {
    margin-left: 6px;
}

.task {
    width: 159px;
    height: 26px;
    margin: 5px 0 0 5px;
    display: flex;
    align-items: center;
    gap: 2px;
    padding-left: 10px;
    font-size: 11px;
    letter-spacing: .3px;
    white-space: nowrap;
    background: #1e46a8;
    border-radius: 2px;
}

.ie {
    width: 17px;
    height: 17px;
    flex: none;
}

.tray {
    margin-left: auto;
    align-self: flex-end;
    height: 30px;
    width: 129px;
    display: flex;
    align-items: center;
    gap: 2px;
    background: linear-gradient(#1f9ae8, #0f7fd4);
    border-top: 1px solid #0a63b8;
}

.tray-toggle {
    position: relative;
    flex: none;
    width: 18px;
    height: 18px;
    margin-left: -9px;
    border-radius: 50%;
    background: #3f8bf0;
    border: 1px solid #bcd4fa;
}

.tray-toggle::after {
    content: "";
    position: absolute;
    left: 6px;
    top: 4px;
    width: 6px;
    height: 6px;
    border-left: 2px solid #fff;
    border-bottom: 2px solid #fff;
    transform: rotate(45deg);
}

.tray-env {
    width: 14px;
    height: 14px;
}

.tray-net {
    width: 15px;
    height: 15px;
}

.tray-k {
    position: relative;
    width: 13px;
    height: 14px;
    margin-left: 3px;
    line-height: 14px;
    text-align: center;
    font-weight: bold;
    font-size: 12px;
    color: #fff;
    background: #d81820;
}

.tray-k::after {
    content: "";
    position: absolute;
    right: 0;
    bottom: 0;
    border-style: solid;
    border-width: 0 0 7px 7px;
    border-color: transparent transparent #000;
}

.clock {
    margin-left: 8px;
    font-size: 11px;
    letter-spacing: .3px;
    color: #e4efff;
}
```
